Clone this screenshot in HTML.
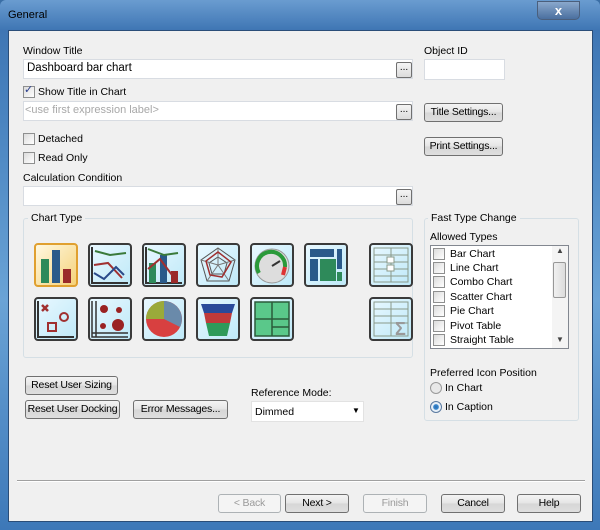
<!DOCTYPE html>
<html><head><meta charset="utf-8"><style>
*{box-sizing:border-box;margin:0;padding:0}
body{width:600px;height:530px;overflow:hidden;font-family:"Liberation Sans",sans-serif;font-size:10.5px;color:#000;background:#3a6ea5;position:relative}
.frame{position:absolute;left:0;top:0;width:600px;height:530px;background:linear-gradient(180deg,#6a9cd0 0,#3f76b4 30px,#4a84c0 120px,#6aa3d6 300px,#3d78b8 530px);border-radius:6px 6px 0 0}
.client{position:absolute;left:8px;top:30px;width:585px;height:492px;background:#f0f0f0;border:1px solid #2a4d78}
.a{position:absolute}
.t{position:absolute;white-space:nowrap}
.inp{position:absolute;background:#fff;border:1px solid #d8dce2}
.btn{position:absolute;white-space:nowrap;border:1px solid #707070;border-radius:3px;background:linear-gradient(#f4f4f4,#e4e4e4 50%,#d6d6d6 51%,#dedede);text-align:center;line-height:17px;font-size:10.5px;letter-spacing:-0.2px}
.dis{color:#9a9a9a;border-color:#adb2b5;background:#f4f4f4}
.dots{position:absolute;width:16px;height:16px;border:1px solid #707070;border-radius:2px;background:linear-gradient(#f4f4f4,#dcdcdc);font-size:10px;text-align:center;line-height:10px}
.cb{position:absolute;width:12px;height:12px;border:1px solid #8e8f8f;background:linear-gradient(135deg,#dcdcdc,#fff)}
.grp{position:absolute;border:1px solid #d5dfe5;border-radius:3px}
.ic{position:absolute;width:44px;height:44px;border:2px solid #3a3a3a;border-radius:4px;background:linear-gradient(135deg,#e8f8ff,#bfe9f8);overflow:hidden}
.ic svg{width:40px;height:40px;display:block}
</style></head><body>
<div class="frame"></div>
<div class="t" style="left:8px;top:9px;font-size:11px;color:#000">General</div>
<div class="a" style="left:537px;top:1px;width:43px;height:19px;border:1px solid #4b5f7c;border-radius:0 0 5px 5px;background:linear-gradient(#8aa8cc,#4a6f9f);color:#fff;font-weight:bold;text-align:center;font-size:13px;line-height:17px">x</div>
<div class="client"></div>

<div class="t" style="left:23px;top:45px">Window Title</div>
<div class="inp" style="left:23px;top:59px;width:390px;height:20px"></div>
<div class="t" style="left:27px;top:62px;font-size:11.5px">Dashboard bar chart</div>
<div class="dots" style="left:396px;top:62px">...</div>
<div class="t" style="left:424px;top:45px">Object ID</div>
<div class="inp" style="left:424px;top:59px;width:81px;height:21px"></div>

<div class="cb" style="left:23px;top:86px"></div><div class="t" style="left:24px;top:83px;color:#2a3e8c;font-size:11px">✓</div>
<div class="t" style="left:38px;top:86px">Show Title in Chart</div>
<div class="inp" style="left:23px;top:101px;width:390px;height:20px"></div>
<div class="t" style="left:25px;top:104px;color:#a8a8a8;font-size:11px">&lt;use first expression label&gt;</div>
<div class="dots" style="left:396px;top:104px">...</div>
<div class="btn" style="left:424px;top:103px;width:79px;height:19px">Title Settings...</div>

<div class="cb" style="left:23px;top:133px"></div><div class="t" style="left:38px;top:133px">Detached</div>
<div class="cb" style="left:23px;top:152px"></div><div class="t" style="left:38px;top:152px">Read Only</div>
<div class="btn" style="left:424px;top:137px;width:79px;height:19px">Print Settings...</div>

<div class="t" style="left:23px;top:172px">Calculation Condition</div>
<div class="inp" style="left:23px;top:186px;width:390px;height:20px"></div>
<div class="dots" style="left:396px;top:189px">...</div>

<div class="grp" style="left:23px;top:218px;width:390px;height:140px"></div>
<div class="t" style="left:28px;top:212px;background:#f0f0f0;padding:0 3px">Chart Type</div>

<div class="ic" style="left:34px;top:243px;border-color:#e0a030;background:linear-gradient(135deg,#fff8e0,#f5d27a)"><svg viewBox="0 0 40 40"><rect x="5" y="14" width="8" height="24" fill="#2e8a5a"/><rect x="16" y="5" width="8" height="33" fill="#2a5a8a"/><rect x="27" y="24" width="8" height="14" fill="#9a2a2a"/></svg></div>
<div class="ic" style="left:88px;top:243px"><svg viewBox="0 0 40 40"><path d="M2 2V38H38" stroke="#333" stroke-width="2" fill="none"/><path d="M5 6L20 10 36 8" stroke="#3a7a3a" stroke-width="2" fill="none"/><path d="M4 20L18 18 32 33" stroke="#a03030" stroke-width="2" fill="none"/><path d="M4 28L14 34 26 22 34 30" stroke="#2a4a8a" stroke-width="2" fill="none"/></svg></div>
<div class="ic" style="left:142px;top:243px"><svg viewBox="0 0 40 40"><path d="M2 2V38H38" stroke="#333" stroke-width="2" fill="none"/><rect x="5" y="18" width="7" height="20" fill="#2e8a5a"/><rect x="16" y="10" width="7" height="28" fill="#2a5a8a"/><rect x="27" y="26" width="7" height="12" fill="#9a2a2a"/><path d="M4 4L20 10 34 8" stroke="#3a7a3a" stroke-width="2" fill="none"/><path d="M4 24L16 14 28 30" stroke="#a03030" stroke-width="2" fill="none"/></svg></div>
<div class="ic" style="left:196px;top:243px"><svg viewBox="0 0 40 40"><polygon points="20,3 37,15 31,36 9,36 3,15" fill="none" stroke="#555"/><polygon points="20,12 29,18 26,29 14,29 11,18" fill="none" stroke="#555"/><path d="M20 3V20M37 15L20 20M31 36L20 20M9 36L20 20M3 15L20 20" stroke="#777"/><polygon points="20,7 33,17 24,32 12,30 8,16" fill="none" stroke="#a03030" stroke-width="1.5"/></svg></div>
<div class="ic" style="left:250px;top:243px"><svg viewBox="0 0 40 40"><circle cx="20" cy="21" r="17" fill="#ddd" stroke="#999"/><path d="M7 28A14 14 0 1 1 33 22" stroke="#2a9a3a" stroke-width="4" fill="none"/><path d="M33 22L31 30" stroke="#d33" stroke-width="4"/><path d="M20 21L28 16" stroke="#333" stroke-width="2"/></svg></div>
<div class="ic" style="left:304px;top:243px"><svg viewBox="0 0 40 40"><rect x="4" y="4" width="24" height="8" fill="#2a5a8a"/><rect x="4" y="14" width="8" height="22" fill="#2a5a8a"/><rect x="14" y="14" width="16" height="22" fill="#2e8a5a"/><rect x="31" y="4" width="5" height="20" fill="#2a5a8a"/><rect x="31" y="27" width="5" height="9" fill="#2e8a5a"/></svg></div>
<div class="ic" style="left:369px;top:243px"><svg viewBox="0 0 40 40" stroke="#8a9a8a" fill="none"><rect x="3" y="3" width="34" height="34"/><path d="M3 10H37M3 17H37M3 24H37M3 31H37M20 3V37"/><rect x="16" y="12" width="7" height="6" fill="#fff"/><rect x="16" y="20" width="7" height="6" fill="#fff"/></svg></div>
<div class="ic" style="left:34px;top:297px"><svg viewBox="0 0 40 40"><path d="M2 2V38H38" stroke="#333" stroke-width="2" fill="none"/><path d="M6 6L12 12M12 6L6 12" stroke="#a03030" stroke-width="2.5"/><circle cx="28" cy="18" r="4" fill="none" stroke="#a03030" stroke-width="2"/><rect x="12" y="24" width="8" height="8" fill="none" stroke="#a03030" stroke-width="2"/></svg></div>
<div class="ic" style="left:88px;top:297px"><svg viewBox="0 0 40 40"><path d="M2 2V38H38M6 2V38M2 34H38" stroke="#333" stroke-width="1.5" fill="none"/><circle cx="14" cy="10" r="4" fill="#9a2222"/><circle cx="29" cy="11" r="3" fill="#9a2222"/><circle cx="13" cy="27" r="3" fill="#9a2222"/><circle cx="28" cy="26" r="6" fill="#9a2222"/></svg></div>
<div class="ic" style="left:142px;top:297px"><svg viewBox="0 0 40 40"><circle cx="20" cy="20" r="18" fill="#d84040"/><path d="M20 20L20 2A18 18 0 0 1 36 28Z" fill="#6a8aaa"/><path d="M20 20L2 20A18 18 0 0 1 20 2Z" fill="#9aaa3a"/></svg></div>
<div class="ic" style="left:196px;top:297px"><svg viewBox="0 0 40 40"><polygon points="3,5 37,5 34,14 6,14" fill="#2a4a9a"/><polygon points="6,14 34,14 32,24 8,24" fill="#c03a3a"/><polygon points="8,24 32,24 29,37 11,37" fill="#2e9a5a"/></svg></div>
<div class="ic" style="left:250px;top:297px"><svg viewBox="0 0 40 40"><rect x="3" y="3" width="34" height="34" fill="#5ac88a" stroke="#2a5a3a" stroke-width="1.5"/><path d="M20 3V37M3 20H37M20 28H37" stroke="#2a5a3a" stroke-width="1.5"/></svg></div>
<div class="ic" style="left:369px;top:297px"><svg viewBox="0 0 40 40" stroke="#8a9a8a" fill="none"><rect x="3" y="3" width="34" height="34"/><path d="M3 10H37M3 17H37M3 24H37M20 3V37"/><text x="24" y="36" font-size="18" font-weight="bold" fill="#999" stroke="none" font-family="Liberation Sans">Σ</text></svg></div>

<div class="grp" style="left:424px;top:218px;width:155px;height:203px"></div>
<div class="t" style="left:428px;top:212px;background:#f0f0f0;padding:0 3px">Fast Type Change</div>
<div class="t" style="left:430px;top:231px">Allowed Types</div>
<div class="inp" style="left:430px;top:245px;width:139px;height:104px;border-color:#828790"></div>
<div class="a" style="left:552px;top:246px;width:16px;height:102px;background:#f4f4f4"></div>
<div class="a" style="left:553px;top:262px;width:13px;height:36px;border:1px solid #979797;border-radius:2px;background:linear-gradient(90deg,#f0f0f0,#dcdcdc)"></div>
<div class="t" style="left:556px;top:246px;font-size:8px;color:#444">▲</div>
<div class="t" style="left:556px;top:335px;font-size:8px;color:#444">▼</div>
<div class="cb" style="left:433px;top:248px"></div><div class="t" style="left:450px;top:248px">Bar Chart</div>
<div class="cb" style="left:433px;top:262px"></div><div class="t" style="left:450px;top:262px">Line Chart</div>
<div class="cb" style="left:433px;top:276px"></div><div class="t" style="left:450px;top:276px">Combo Chart</div>
<div class="cb" style="left:433px;top:291px"></div><div class="t" style="left:450px;top:291px">Scatter Chart</div>
<div class="cb" style="left:433px;top:305px"></div><div class="t" style="left:450px;top:305px">Pie Chart</div>
<div class="cb" style="left:433px;top:320px"></div><div class="t" style="left:450px;top:320px">Pivot Table</div>
<div class="cb" style="left:433px;top:334px"></div><div class="t" style="left:450px;top:334px">Straight Table</div>

<div class="t" style="left:430px;top:367px">Preferred Icon Position</div>
<div class="a" style="left:430px;top:382px;width:12px;height:12px;border-radius:50%;border:1px solid #999;background:#e8e8e8"></div>
<div class="t" style="left:445px;top:382px">In Chart</div>
<div class="a" style="left:430px;top:401px;width:12px;height:12px;border-radius:50%;border:1px solid #5a7aa0;background:radial-gradient(#2a6ab0 0,#3a8ad0 35%,#e8f0f8 45%)"></div>
<div class="t" style="left:445px;top:401px">In Caption</div>

<div class="btn" style="left:25px;top:376px;width:93px;height:19px">Reset User Sizing</div>
<div class="btn" style="left:25px;top:400px;width:95px;height:19px">Reset User Docking</div>
<div class="btn" style="left:133px;top:400px;width:95px;height:19px">Error Messages...</div>
<div class="t" style="left:251px;top:387px">Reference Mode:</div>
<div class="inp" style="left:251px;top:401px;width:113px;height:21px;border-color:#e2e2e2"></div>
<div class="t" style="left:255px;top:406px">Dimmed</div>
<div class="t" style="left:352px;top:406px;font-size:8px">▼</div>

<div class="a" style="left:17px;top:480px;width:568px;height:2px;border-top:1px solid #a0a0a0;border-bottom:1px solid #fff"></div>
<div class="btn dis" style="left:218px;top:494px;width:63px;height:19px">&lt; Back</div>
<div class="btn" style="left:285px;top:494px;width:64px;height:19px">Next &gt;</div>
<div class="btn dis" style="left:363px;top:494px;width:64px;height:19px">Finish</div>
<div class="btn" style="left:441px;top:494px;width:64px;height:19px">Cancel</div>
<div class="btn" style="left:517px;top:494px;width:64px;height:19px">Help</div>
</body></html>
